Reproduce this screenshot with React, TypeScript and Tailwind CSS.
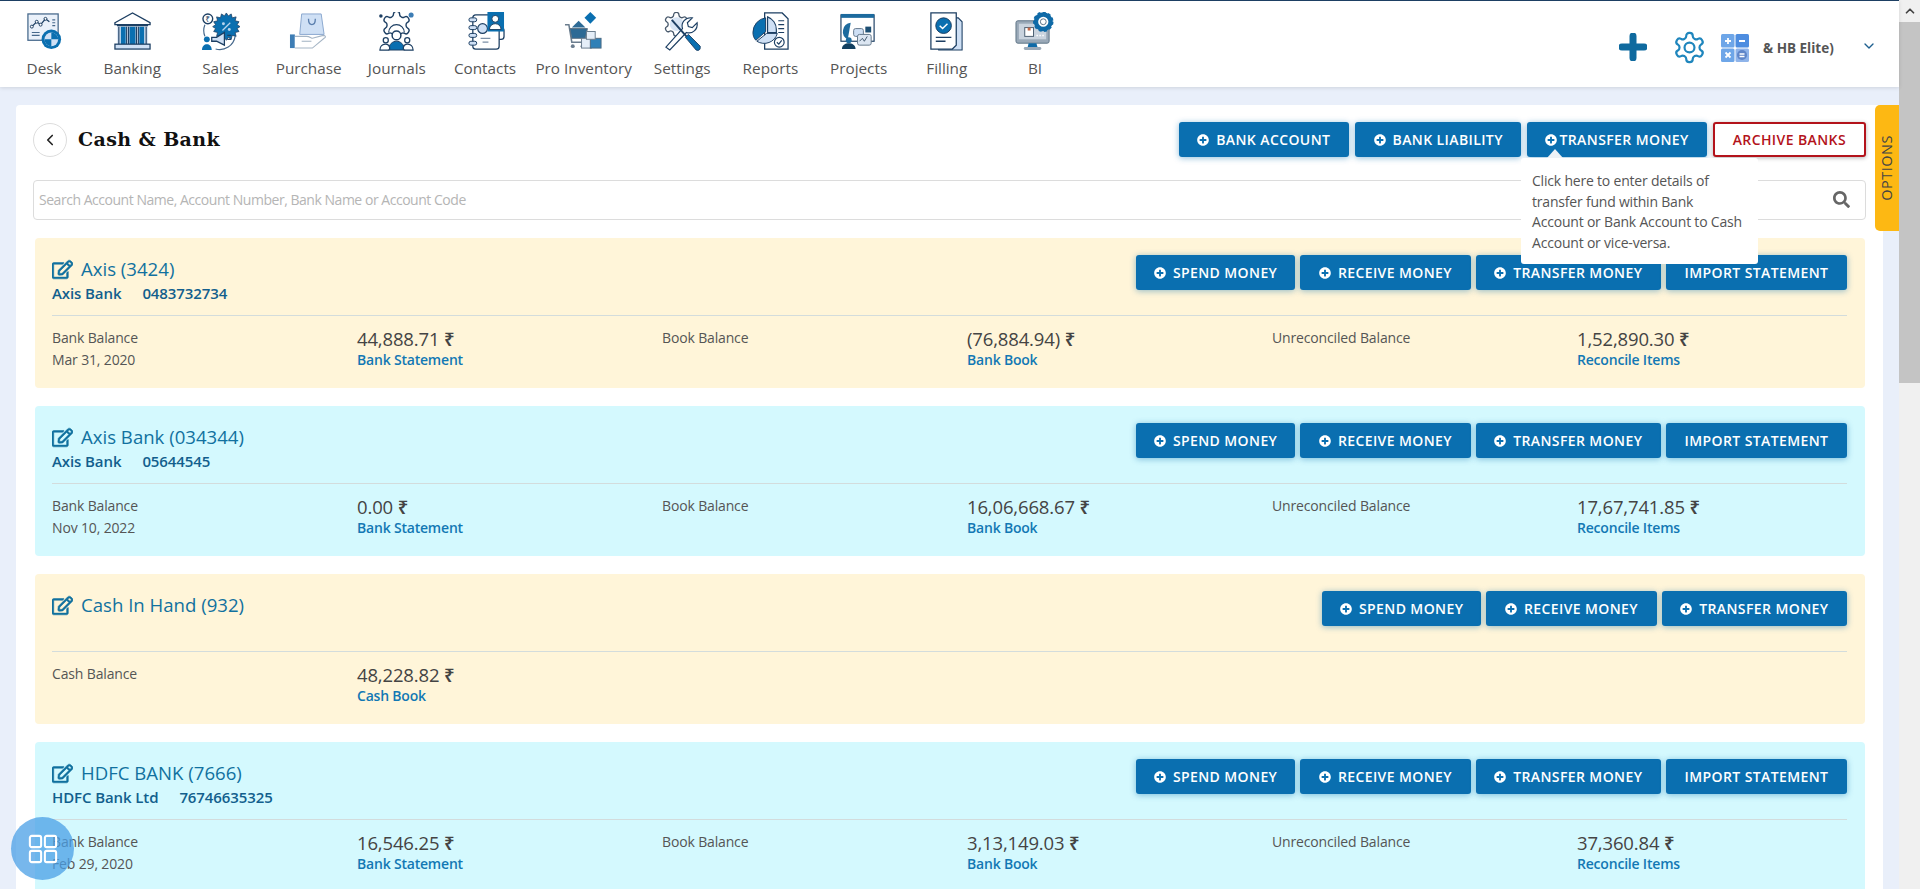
import { ChevronDown, ChevronLeft, ChevronUp } from 'lucide-react';
import { FaPlusCircle, FaRegEdit, FaSearch } from 'react-icons/fa';
import type { ReactNode } from 'react';

const ink = '#1d3f63';
const blue = '#0a6fb0';
const pale = '#cfe0f5';
const gear =
  'M12.22 2h-.44a2 2 0 0 0-2 2v.18a2 2 0 0 1-1 1.73l-.43.25a2 2 0 0 1-2 0l-.15-.08a2 2 0 0 0-2.73.73l-.22.38a2 2 0 0 0 .73 2.73l.15.1a2 2 0 0 1 1 1.72v.51a2 2 0 0 1-1 1.74l-.15.09a2 2 0 0 0-.73 2.73l.22.38a2 2 0 0 0 2.73.73l.15-.08a2 2 0 0 1 2 0l.43.25a2 2 0 0 1 1 1.73V20a2 2 0 0 0 2 2h.44a2 2 0 0 0 2-2v-.18a2 2 0 0 1 1-1.73l.43-.25a2 2 0 0 1 2 0l.15.08a2 2 0 0 0 2.73-.73l.22-.39a2 2 0 0 0-.73-2.73l-.15-.08a2 2 0 0 1-1-1.74v-.5a2 2 0 0 1 1-1.74l.15-.09a2 2 0 0 0 .73-2.73l-.22-.38a2 2 0 0 0-2.73-.73l-.15.08a2 2 0 0 1-2 0l-.43-.25a2 2 0 0 1-1-1.73V4a2 2 0 0 0-2-2z';

const DeskIcon = () => (
  <svg viewBox="0 0 40 40" className="h-full w-full">
    <rect x="3" y="2" width="31" height="27" fill="#eaf1fa" stroke="#47698c" strokeWidth="1.3" />
    <path d="M7 15l5-5 4 3 5-6 4 3" fill="none" stroke={ink} strokeWidth="1.3" />
    <circle cx="7" cy="15" r="1.5" fill="#fff" stroke={ink} />
    <circle cx="12" cy="10" r="1.5" fill="#fff" stroke={ink} />
    <circle cx="16" cy="13" r="1.5" fill="#fff" stroke={ink} />
    <circle cx="21" cy="7" r="1.5" fill="#fff" stroke={ink} />
    <path d="M28 8h3M28 11h3M28 14h3M7 21h8M7 24h8" stroke="#47698c" strokeWidth="1.2" />
    <circle cx="27" cy="28" r="10" fill={blue} />
    <circle cx="27" cy="28" r="7" fill={pale} />
    <path d="M27 28V21a7 7 0 0 1 7 7zM27 28v7a7 7 0 0 1-7-7z" fill={blue} />
  </svg>
);

const BankIcon = () => (
  <svg viewBox="0 0 40 40" className="h-full w-full">
    <path d="M2 11L20 1l18 10v2H2z" fill="#fff" stroke={ink} strokeWidth="1.4" />
    <rect x="4" y="15" width="32" height="18" fill="#dbe7f6" />
    <path d="M8 15h5v18H8zM17 15h6v18h-6zM27 15h5v18h-5z" fill={blue} />
    <path d="M4 14h32M6 15v18M14 15v18M16 15v18M24 15v18M26 15v18M34 15v18" stroke={ink} strokeWidth="1.2" />
    <rect x="2" y="33" width="36" height="5" fill={pale} stroke={ink} strokeWidth="1.3" />
  </svg>
);

const SalesIcon = () => (
  <svg viewBox="0 0 40 40" className="h-full w-full">
    <circle cx="7" cy="7" r="5" fill="#fff" stroke={ink} strokeWidth="1.4" />
    <text x="7" y="10" textAnchor="middle" fontSize="8" fill={ink} fontFamily="'Noto Sans', sans-serif">₹</text>
    <path d="M26 1l2 3 3-2 1 4 4-1-1 4 4 1-2 3 3 2-3 2 2 3-4 1 1 4-4-1-1 4-3-2-2 3-2-3-3 2-1-4-4 1 1-4-4-1 2-3-3-2 3-2-2-3 4-1-1-4 4 1 1-4 3 2z" fill={blue} stroke={ink} strokeWidth="0.8" />
    <path d="M22 19l8-8" stroke="#b9d4ee" strokeWidth="1.3" />
    <circle cx="23" cy="12" r="1.5" fill="#b9d4ee" />
    <circle cx="29" cy="18" r="1.5" fill="#b9d4ee" />
    <path d="M4 13a16 16 0 0 0 0 12M15 38a16 16 0 0 0 20-13" fill="none" stroke="#47698c" strokeWidth="1.2" />
    <circle cx="6" cy="28" r="3" fill={blue} />
    <path d="M1 39c0-8 10-8 10 0z" fill={blue} />
    <path d="M11 26h5l8-5v13l-8-4h-5z" fill={pale} stroke={ink} strokeWidth="1.3" />
    <path d="M27 24h4M27 28h4" stroke={ink} strokeWidth="1.3" />
  </svg>
);

const PurchaseIcon = () => (
  <svg viewBox="0 0 40 40" className="h-full w-full">
    <path d="M13 2h20l3 21H11z" fill={pale} stroke="#8aa8cf" strokeWidth="1" />
    <path d="M20 7c0 8 7 8 7 0" fill="none" stroke="#5b7fae" strokeWidth="1.4" />
    <rect x="1" y="23" width="5" height="14" fill="#3d7db5" />
    <path d="M6 25h12c3 0 5 2 6 2l11-3c3 0 3 2 1 3L24 37H6" fill="#fff" stroke="#a5b5c5" strokeWidth="1.1" />
    <path d="M13 30h10" stroke="#a5b5c5" strokeWidth="1.1" />
  </svg>
);

const JournalsIcon = () => (
  <svg viewBox="0 0 40 40" className="h-full w-full">
    <path d={gear} transform="translate(3 -3.5) scale(1.42)" fill="#fff" stroke={ink} strokeWidth="1" />
    <path d="M12 21a8 8 0 0 1 16 0" fill="none" stroke={ink} strokeWidth="1.2" />
    <circle cx="35" cy="3" r="2.6" fill="#3d7db5" />
    <circle cx="4" cy="4" r="1.8" fill={ink} />
    <circle cx="20" cy="24" r="4.5" fill="#fff" stroke={ink} strokeWidth="1.5" />
    <path d="M12 39c0-12 16-12 16 0z" fill={blue} stroke={ink} />
    <circle cx="9" cy="29" r="2.6" fill="#fff" stroke={ink} strokeWidth="1.3" />
    <path d="M3 39c0-8 11-8 10-1l-1 1z" fill="#fff" stroke={ink} strokeWidth="1.3" />
    <circle cx="31" cy="29" r="2.6" fill="#fff" stroke={ink} strokeWidth="1.3" />
    <path d="M37 39c0-8-11-8-10-1l1 1z" fill="#fff" stroke={ink} strokeWidth="1.3" />
  </svg>
);

const ContactsIcon = () => (
  <svg viewBox="0 0 40 40" className="h-full w-full">
    <rect x="7" y="3" width="27" height="35" rx="3" fill="#fff" stroke={ink} strokeWidth="1.3" />
    <path d="M34 16h2a3 3 0 0 1 3 3v6a3 3 0 0 1-3 3h-2" fill="none" stroke={ink} strokeWidth="1.3" />
    <rect x="3" y="6" width="8" height="4" rx="2" fill={pale} stroke={ink} />
    <rect x="3" y="14" width="8" height="4" rx="2" fill={pale} stroke={ink} />
    <rect x="3" y="22" width="8" height="4" rx="2" fill={pale} stroke={ink} />
    <rect x="3" y="30" width="8" height="4" rx="2" fill={pale} stroke={ink} />
    <circle cx="17" cy="17" r="5" fill={pale} stroke={ink} strokeWidth="1.2" />
    <rect x="22" y="0" width="17" height="20" fill={blue} />
    <circle cx="30" cy="7" r="3.5" fill="#fff" stroke={ink} />
    <path d="M24 18c0-8 12-8 12 0z" fill="#fff" stroke={ink} />
    <path d="M15 27h10M17 31h6" stroke="#7b8fa6" strokeWidth="1.3" />
  </svg>
);

const InventoryIcon = () => (
  <svg viewBox="0 0 40 40" className="h-full w-full">
    <path d="M27 0l6 6-6 6-6-6z" fill={blue} />
    <path d="M15 9l7 7H8z" fill="#2d6a95" />
    <path d="M1 13h4l3 18h13" fill="none" stroke="#6b7d8e" strokeWidth="1.6" />
    <path d="M6 17h18l-2 10H8z" fill="#2d6a95" stroke="#5c7184" />
    <circle cx="9" cy="35" r="2" fill="#6b7d8e" />
    <circle cx="19" cy="35" r="2" fill="#6b7d8e" />
    <rect x="18" y="27" width="10" height="10" fill="#e5eef8" stroke="#6b7d8e" />
    <rect x="27" y="27" width="11" height="10" fill="#2f80b7" stroke="#4c6a82" />
    <rect x="23" y="20" width="9" height="8" fill="#e5eef8" stroke="#6b7d8e" />
  </svg>
);

const SettingsIcon = () => (
  <svg viewBox="0 0 40 40" className="h-full w-full">
    <path d={gear} transform="translate(-1 -2) scale(1.22)" fill="#fff" stroke="#47586b" strokeWidth="1.1" />
    <circle cx="14" cy="12.5" r="7" fill="#d8e5f5" />
    <path d="M7 39l-4-3 17-19c-2-6 3-12 10-11l-5 5 1 4 4 1 5-5c1 7-5 12-11 10z" fill="#fff" stroke={ink} strokeWidth="1.2" />
    <path d="M9 8l15 17" stroke={ink} strokeWidth="2" />
    <path d="M23 26l3-3 12 12c1 4-2 5-4 4z" fill={blue} stroke={ink} />
  </svg>
);

const ReportsIcon = () => (
  <svg viewBox="0 0 40 40" className="h-full w-full">
    <path d="M14 1h18l6 6v31H14z" fill="#fff" stroke={ink} strokeWidth="1.3" />
    <path d="M28 9h6M28 13h6M28 17h6M28 21h6" stroke={ink} strokeWidth="1.2" />
    <path d="M17 5a14 14 0 0 1 9 13v3H17z" fill={pale} stroke={ink} strokeWidth="1.2" />
    <path d="M15 6a15 15 0 0 0-13 15c0 3 1 6 3 8l10-9z" fill={blue} stroke={ink} />
    <path d="M16 22h11a14 14 0 0 1-21 8z" fill={pale} stroke={ink} />
    <circle cx="29" cy="31" r="5" fill="#fff" stroke={ink} strokeWidth="1.2" />
    <path d="M26.5 31l2 2 3-4" fill="none" stroke={ink} strokeWidth="1.2" />
  </svg>
);

const ProjectsIcon = () => (
  <svg viewBox="0 0 40 40" className="h-full w-full">
    <rect x="2" y="3" width="34" height="27" fill="#fff" stroke={ink} strokeWidth="1.2" />
    <rect x="2" y="2" width="34" height="4" fill="#1c6a9e" />
    <path d="M12 11a9 9 0 0 0-3 17z" fill="#1c6a9e" />
    <rect x="27" y="15" width="6" height="6" fill="#1d4f73" />
    <rect x="15" y="17" width="10" height="8" rx="2" fill={pale} stroke="#65788c" />
    <rect x="19" y="23" width="14" height="11" rx="2" fill="#dce6f2" stroke="#65788c" />
    <path d="M21 30l3-3 2 3 3-5" fill="none" stroke="#42576d" />
    <circle cx="10" cy="29" r="3" fill="#1c6a9e" />
    <path d="M3 38c0-8 14-8 14 0z" fill="#123f5f" />
  </svg>
);

const FillingIcon = () => (
  <svg viewBox="0 0 40 40" className="h-full w-full">
    <path d="M12 6h20l4 4v29H12z" fill={pale} stroke={ink} strokeWidth="1.1" />
    <path d="M4 1h26v33l-4 4H4z" fill="#fff" stroke={ink} strokeWidth="1.3" />
    <circle cx="17" cy="14" r="8" fill={blue} stroke={ink} />
    <path d="M13 14l3 3 5-5" fill="none" stroke="#fff" strokeWidth="1.5" />
    <path d="M9 26h16M9 30h10" stroke={ink} strokeWidth="1.3" />
  </svg>
);

const BiIcon = () => (
  <svg viewBox="0 0 40 40" className="h-full w-full">
    <rect x="1" y="9" width="34" height="23" rx="2" fill="#9aa9b8" stroke="#5f7487" />
    <rect x="4" y="12" width="28" height="16" fill="#c9d3de" />
    <rect x="10" y="16" width="9" height="9" fill="#fff" stroke="#4a5d70" />
    <path d="M13 16v3h3v-3" fill="#c46a4a" />
    <path d="M22 24h8" stroke="#fff" strokeDasharray="1.5 1.5" strokeWidth="1.5" />
    <path d="M14 32h8l1 4H13z" fill="#0f6aa7" />
    <rect x="9" y="36" width="18" height="3" rx="1.5" fill="#9aa9b8" />
    <circle cx="29" cy="10" r="7.5" fill="#fff" stroke="#0f6aa7" strokeWidth="4.5" />
    <circle cx="29" cy="10" r="9.5" fill="none" stroke="#0f6aa7" strokeWidth="2" strokeDasharray="3 2.5" />
    <circle cx="29" cy="10" r="3" fill="#fff" stroke="#5f7487" />
  </svg>
);

const navItems: { label: string; icon: ReactNode; wide?: boolean }[] = [
  { label: 'Desk', icon: <DeskIcon /> },
  { label: 'Banking', icon: <BankIcon /> },
  { label: 'Sales', icon: <SalesIcon /> },
  { label: 'Purchase', icon: <PurchaseIcon /> },
  { label: 'Journals', icon: <JournalsIcon /> },
  { label: 'Contacts', icon: <ContactsIcon /> },
  { label: 'Pro Inventory', icon: <InventoryIcon />, wide: true },
  { label: 'Settings', icon: <SettingsIcon /> },
  { label: 'Reports', icon: <ReportsIcon /> },
  { label: 'Projects', icon: <ProjectsIcon /> },
  { label: 'Filling', icon: <FillingIcon /> },
  { label: 'BI', icon: <BiIcon /> },
];

interface Account {
  name: string;
  bank?: string;
  number?: string;
  tone: 'cream' | 'cyan';
  bankBalance: string;
  date?: string;
  book?: string;
  unreconciled?: string;
  cash?: boolean;
}

const accounts: Account[] = [
  { name: 'Axis (3424)', bank: 'Axis Bank', number: '0483732734', tone: 'cream', bankBalance: '44,888.71', date: 'Mar 31, 2020', book: '(76,884.94)', unreconciled: '1,52,890.30' },
  { name: 'Axis Bank (034344)', bank: 'Axis Bank', number: '05644545', tone: 'cyan', bankBalance: '0.00', date: 'Nov 10, 2022', book: '16,06,668.67', unreconciled: '17,67,741.85' },
  { name: 'Cash In Hand (932)', tone: 'cream', bankBalance: '48,228.82', cash: true },
  { name: 'HDFC BANK (7666)', bank: 'HDFC Bank Ltd', number: '76746635325', tone: 'cyan', bankBalance: '16,546.25', date: 'Feb 29, 2020', book: '3,13,149.03', unreconciled: '37,360.84' },
];

const ActionButton = ({ label, plus = true, tight = false, wide = false }: { label: string; plus?: boolean; tight?: boolean; wide?: boolean }) => (
  <button
    className={`flex h-[35px] items-center whitespace-nowrap rounded-[3px] bg-[#0a6fb0] text-[14px] font-semibold tracking-[0.4px] text-white shadow-[0_1px_6px_rgba(10,111,176,0.45)] ${
      wide ? 'px-[18.6px]' : 'px-[18px]'
    }`}
  >
    {plus && <FaPlusCircle className={`${tight ? 'mr-[2px]' : 'mr-[7px]'} text-[12px]`} />}
    {label}
  </button>
);

const Stat = ({ amount, link }: { amount: string; link: string }) => (
  <div>
    <p className="text-[18.5px] font-medium leading-[23px] text-[#444]">
      {amount} <span className="font-semibold">₹</span>
    </p>
    <p className="mt-[-1px] text-[14px] font-semibold leading-[22px] tracking-[-0.2px] text-[#1278b4]">{link}</p>
  </div>
);

const AccountCard = ({ account }: { account: Account }) => (
  <section
    className={`h-[150px] rounded-[4px] pl-[17px] pr-[18px] pt-[17px] ${
      account.tone === 'cream' ? 'bg-[#fff5d9]' : 'bg-[#d4f9fe]'
    }`}
  >
    <div className="flex h-[61px] items-start justify-between border-b border-[#d3dcdc]">
      <div>
        <h3 className="flex items-center text-[18.6px] font-medium leading-[28px] text-[#11719f]">
          <FaRegEdit className="mr-[8px] stroke-[14] text-[21px]" />
          {account.name}
        </h3>
        {account.bank && (
          <p className="mt-[-1px] flex gap-[21px] text-[15px] font-semibold leading-[22px] tracking-[-0.1px] text-[#125f8d]">
            <span>{account.bank}</span>
            <span>{account.number}</span>
          </p>
        )}
      </div>
      <div className="flex gap-[5px]">
        <ActionButton label="SPEND MONEY" />
        <ActionButton label="RECEIVE MONEY" wide />
        <ActionButton label="TRANSFER MONEY" wide />
        {!account.cash && <ActionButton label="IMPORT STATEMENT" plus={false} wide />}
      </div>
    </div>
    <div className="grid grid-cols-6 gap-x-[35px] pt-[11px] text-[14px] leading-[22px] tracking-[-0.15px] text-[#555]">
      <div>
        <p>{account.cash ? 'Cash Balance' : 'Bank Balance'}</p>
        {account.date && <p>{account.date}</p>}
      </div>
      <Stat amount={account.bankBalance} link={account.cash ? 'Cash Book' : 'Bank Statement'} />
      {!account.cash && (
        <>
          <p>Book Balance</p>
          <Stat amount={account.book ?? ''} link="Bank Book" />
          <p>Unreconciled Balance</p>
          <Stat amount={account.unreconciled ?? ''} link="Reconcile Items" />
        </>
      )}
    </div>
  </section>
);

const App = () => {
  return (
    <div className="flex h-[889px] overflow-hidden bg-[#e9effa] font-['Open_Sans','Noto_Sans',sans-serif]">
      <div className="relative min-w-0 flex-1">
        <header className="flex h-[87px] items-start justify-between border-t border-[#1d3f63] bg-white shadow-[0_1px_4px_rgba(0,0,0,0.12)]">
          <nav className="flex">
            {navItems.map((item) => (
              <a
                key={item.label}
                className={`flex flex-col items-center pt-[11px] ${item.wide ? 'w-[109px]' : 'w-[88.2px]'}`}
              >
                <span className="h-[39px] w-[39px]">{item.icon}</span>
                <span className="mt-[7px] whitespace-nowrap text-[15.3px] font-medium leading-[20px] text-[#555]">
                  {item.label}
                </span>
              </a>
            ))}
          </nav>
          <div className="flex items-center pr-[22px] pt-[29px]">
            <svg viewBox="0 0 28 28" className="mb-[2px] h-[28px] w-[28px]">
              <path d="M14 3v22M3 14h22" stroke="#0f6a9f" strokeWidth="7" strokeLinecap="round" />
            </svg>
            <svg viewBox="0 0 24 24" className="ml-[25px] h-[35px] w-[35px]" fill="none" stroke="#1f86bd" strokeWidth="1.5">
              <path d={gear} />
              <circle cx="12" cy="12" r="3.4" />
            </svg>
            <svg viewBox="0 0 28 28" className="ml-[14px] h-[28px] w-[28px]">
              <rect width="13.5" height="13.5" rx="1.5" fill="#6ea6e8" />
              <rect x="14.5" width="13.5" height="13.5" rx="1.5" fill="#4d8de0" />
              <rect y="14.5" width="13.5" height="13.5" rx="1.5" fill="#6ea6e8" />
              <rect x="14.5" y="14.5" width="13.5" height="13.5" rx="1.5" fill="#8fb4ea" />
              <path d="M4 7h6M7 4v6M18 7h6M4.5 18.5l5 5M9.5 18.5l-5 5" stroke="#fff" strokeWidth="1.8" />
              <circle cx="21" cy="21" r="5" fill="#5f86c9" />
              <path d="M18.5 20h5M18.5 22.5h5" stroke="#fff" strokeWidth="1.3" />
            </svg>
            <span className="ml-[14px] mt-[1px] w-[98px] whitespace-nowrap text-[13.5px] font-bold text-[#555]">&amp; HB Elite)</span>
            <ChevronDown className="mb-[4px] h-[16px] w-[16px] text-[#1d5f8f]" />
          </div>
        </header>

        <main className="ml-[16px] mr-[16px] mt-[18px] rounded-t-[4px] bg-white px-[17px] pt-[17px]">
          <div className="flex h-[35px] items-center justify-between">
            <div className="flex items-center">
              <span className="flex h-[34px] w-[34px] items-center justify-center rounded-full border border-[#ddd]">
                <ChevronLeft className="h-[18px] w-[18px] text-[#222]" strokeWidth={2.2} />
              </span>
              <h1 className="ml-[11px] font-['DejaVu_Serif',serif] text-[19px] font-bold tracking-[0.4px] text-[#111]">
                Cash &amp; Bank
              </h1>
            </div>
            <div className="flex gap-[6px]">
              <ActionButton label="BANK ACCOUNT" wide />
              <ActionButton label="BANK LIABILITY" wide />
              <ActionButton label="TRANSFER MONEY" tight />
              <button className="flex h-[35px] items-center rounded-[3px] border-2 border-[#b3131b] bg-white px-[18px] text-[14px] font-semibold tracking-[0.4px] text-[#b3131b] shadow-[0_1px_4px_rgba(0,0,0,0.3)]">
                ARCHIVE BANKS
              </button>
            </div>
          </div>

          <div className="mt-[23px] flex h-[40px] items-center justify-between rounded-[4px] border border-[#dcdcdc] pb-[2px] pl-[5px] pr-[15px]">
            <span className="text-[14px] tracking-[-0.47px] text-[#b5b5b5]">Search Account Name, Account Number, Bank Name or Account Code</span>
            <FaSearch className="text-[17px] text-[#666]" />
          </div>

          <div className="mt-[18px] flex flex-col gap-[18px] pl-[2px] pr-[1px]">
            {accounts.map((account) => (
              <AccountCard key={account.name} account={account} />
            ))}
          </div>
        </main>

        {/* tooltip under the hovered transfer button */}
        <div className="absolute left-[1521px] top-[158px] w-[237px] rounded-[3px] bg-white pb-[11px] pl-[11px] pr-[12px] pt-[13px] text-[14px] leading-[20.5px] tracking-[-0.2px] text-[#555]">
          <span className="absolute left-[26px] top-[-9px] h-0 w-0 border-x-[8px] border-b-[9px] border-x-transparent border-b-[#eef2f6]" />
          Click here to enter details of transfer fund within Bank Account or Bank Account to Cash Account or vice-versa.
        </div>

        <div className="absolute right-0 top-[105px] flex h-[126px] w-[24px] items-center justify-center rounded-l-[5px] bg-[#fdb813]">
          <span className="-rotate-90 whitespace-nowrap text-[14.5px] tracking-[0.5px] text-[#444]">OPTIONS</span>
        </div>

        <button className="absolute left-[11px] top-[817px] flex h-[63px] w-[63px] items-center justify-center rounded-full bg-[#4a9fe6]/75">
          <svg viewBox="0 0 32 32" className="h-[30px] w-[30px]" fill="none" stroke="#fff" strokeWidth="2.2">
            <rect x="2" y="2" width="12" height="12" rx="2" />
            <rect x="18" y="2" width="12" height="12" rx="2" />
            <rect x="2" y="18" width="12" height="12" rx="2" />
            <rect x="18" y="18" width="12" height="12" rx="2" />
          </svg>
        </button>
      </div>

      {/* page scrollbar */}
      <aside className="flex w-[21px] flex-col bg-[#f0f0f0]">
        <div className="flex h-[22px] items-center justify-center">
          <ChevronUp className="h-[14px] w-[14px] text-[#444]" strokeWidth={3} />
        </div>
        <div className="h-[361px] bg-[#c4c4c4]" />
      </aside>
    </div>
  );
};

export default App;
